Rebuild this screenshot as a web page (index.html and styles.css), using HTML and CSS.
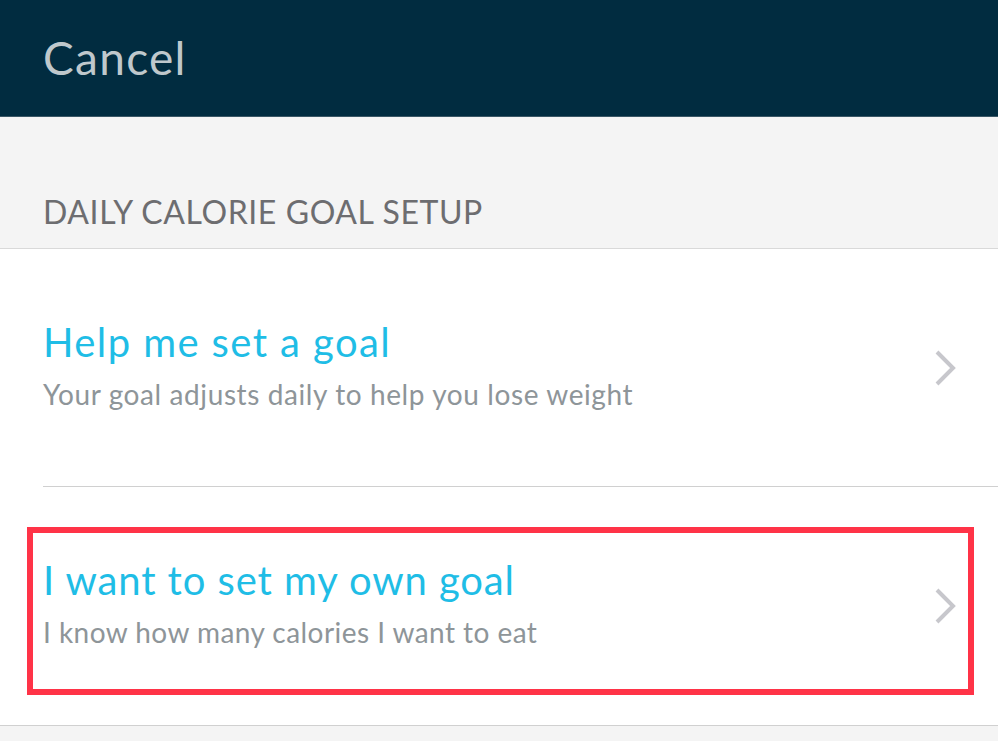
FILE: index.html
```html
<!DOCTYPE html>
<html>
<head>
<meta charset="utf-8">
<link rel="stylesheet" href="styles.css">
</head>
<body>
<header class="topbar"><span class="cancel">Cancel</span></header>
<div class="section-head"><span>DAILY CALORIE GOAL SETUP</span></div>
<ul class="list">
  <li class="row">
    <div class="texts">
      <div class="title t1">Help me set a goal</div>
      <div class="sub s1">Your goal adjusts daily to help you lose weight</div>
    </div>
    <svg class="chev" width="24" height="36" viewBox="0 0 24 36"><polyline points="3,2 19,18 3,34" fill="none" stroke="#c7c7cc" stroke-width="4"/></svg>
  </li>
  <li class="row last">
    <div class="texts">
      <div class="title t2">I want to set my own goal</div>
      <div class="sub s2">I know how many calories I want to eat</div>
    </div>
    <svg class="chev" width="24" height="36" viewBox="0 0 24 36"><polyline points="3,2 19,18 3,34" fill="none" stroke="#c7c7cc" stroke-width="4"/></svg>
    <div class="highlight"></div>
  </li>
</ul>
<div class="footer-gray"></div>
</body>
</html>
```
FILE: styles.css
```css
html, body { margin: 0; padding: 0; }
body {
  font-family: Lato, "Open Sans", sans-serif;
  background: #ffffff;
  width: 998px;
  height: 741px;
  overflow: hidden;
}
.topbar {
  background: #012c40;
  border-bottom: 1px solid #3a5766;
  display: flex;
  align-items: center;
  padding-left: 43px;
  box-sizing: border-box;
  height: 117px;
}
.cancel {
  color: #bfc8cc;
  font-size: 46px;
  line-height: 1.2;
  letter-spacing: 1.3px;
}
.section-head {
  background: #f4f4f4;
  border-bottom: 1px solid #d9d9d9;
  display: flex;
  align-items: flex-end;
  padding-left: 43px;
  padding-bottom: 17px;
  height: 114px;
}
.section-head span {
  color: #6d6d70;
  font-size: 32px;
  line-height: 1.2;
  letter-spacing: 0.6px;
}
.list {
  list-style: none;
  margin: 0;
  padding: 0 0 0 43px;
}
.row {
  position: relative;
  height: 237px;
  display: flex;
  align-items: center;
  justify-content: space-between;
  border-bottom: 1px solid #d0d0d0;
  padding-right: 40px;
}
.row.last {
  margin-left: -43px;
  padding-left: 43px;
  height: 238px;
}
.texts { display: flex; flex-direction: column; margin-bottom: 6px; }
.title {
  color: #1fbde6;
  font-size: 40px;
  line-height: 48px;
}
.t1 { letter-spacing: 1.4px; }
.t2 { letter-spacing: 0.9px; }
.sub {
  color: #8e9599;
  font-size: 28px;
  line-height: 36px;
  margin-top: 10px;
}
.s1 { letter-spacing: 0.6px; }
.s2 { letter-spacing: 0.45px; }
.chev { display: block; }
.highlight {
  position: absolute;
  left: 27px;
  top: 40px;
  width: 947px;
  height: 168px;
  border: 6px solid #ff3347;
  box-sizing: border-box;
}
.footer-gray {
  background: #f4f4f4;
  height: 30px;
}
```
